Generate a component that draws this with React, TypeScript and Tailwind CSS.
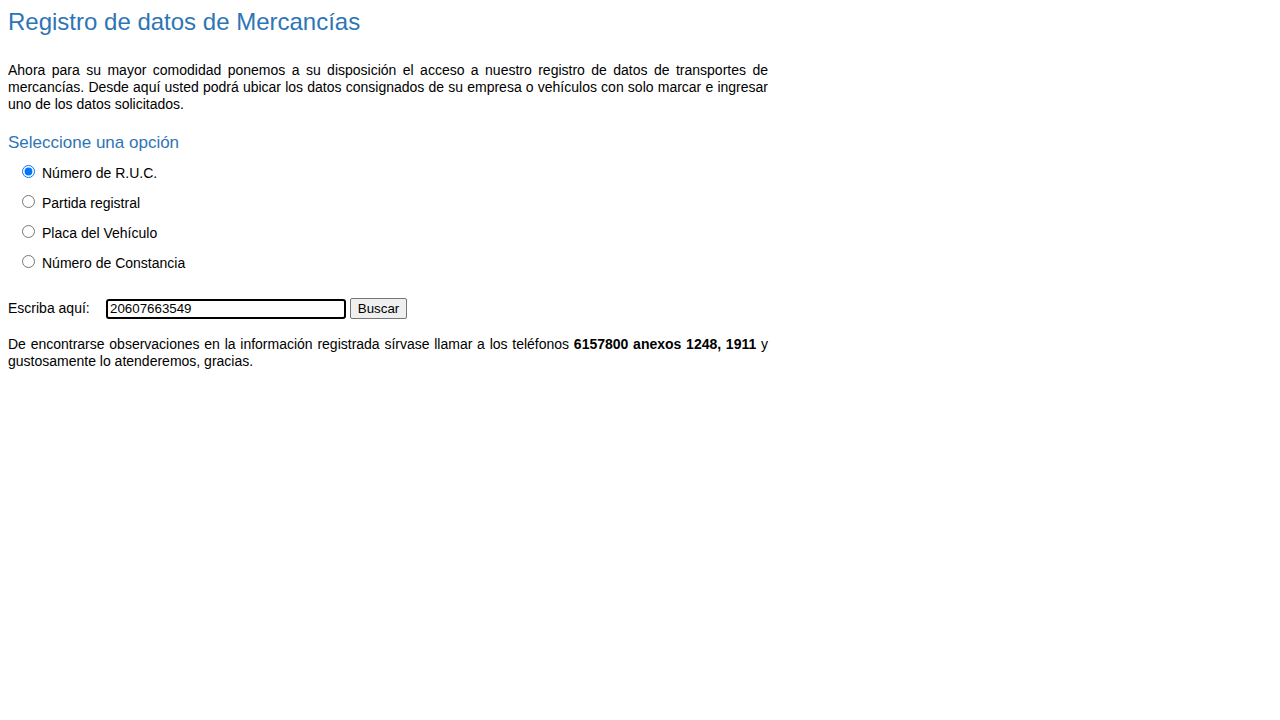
import React, { useState } from "react";

export default function App() {
  const [opt, setOpt] = useState("ruc");
  const options = [
    { id: "ruc", label: "Número de R.U.C." },
    { id: "partida", label: "Partida registral" },
    { id: "placa", label: "Placa del Vehículo" },
    { id: "constancia", label: "Número de Constancia" },
  ];
  return (
    <div className="min-h-screen bg-white text-black font-['Liberation_Sans',Arial,sans-serif]">
      <div className="w-[776px] px-2 pt-2">
        <h1 className="text-[24px] leading-[28px] text-[#2e75b6] font-normal">
          Registro de datos de Mercancías
        </h1>
        <p className="mt-[26px] text-[14px] leading-[17px] text-justify">
          Ahora para su mayor comodidad ponemos a su disposición el acceso a nuestro registro de datos de transportes de mercancías. Desde aquí usted podrá ubicar los datos consignados de su empresa o vehículos con solo marcar e ingresar uno de los datos solicitados.
        </p>
        <h2 className="mt-[20px] text-[17px] leading-[20px] text-[#2e75b6] font-normal">
          Seleccione una opción
        </h2>
        <div className="mt-[11px] flex flex-col gap-[13px] pl-[14px]">
          {options.map((o) => (
            <label key={o.id} className="flex items-center h-[17px] text-[14px] leading-[17px]">
              <input
                type="radio"
                name="opt"
                checked={opt === o.id}
                onChange={() => setOpt(o.id)}
                className="w-[13px] h-[13px] m-0 -mt-[2px]"
              />
              <span className="ml-[7px] pt-[2px]">{o.label}</span>
            </label>
          ))}
        </div>
        <div className="mt-[27px] flex items-center text-[14px]">
          <span className="w-[98px]">Escriba aquí:</span>
          <input
            type="text"
            defaultValue="20607663549"
            className="w-[240px] h-[20px] border-2 border-black rounded-[3px] px-[2px] text-[13.33px] font-['Liberation_Sans',Arial,sans-serif] outline-none"
          />
          <button className="ml-[4px] h-[21px] w-[57px] border border-[#767676] bg-[#efefef] rounded-[2px] text-[13.33px] leading-[15px] text-black">
            Buscar
          </button>
        </div>
        <p className="mt-[17px] text-[14px] leading-[17px] text-justify">
          De encontrarse observaciones en la información registrada sírvase llamar a los teléfonos <b>6157800 anexos 1248, 1911</b> y gustosamente lo atenderemos, gracias.
        </p>
      </div>
    </div>
  );
}
